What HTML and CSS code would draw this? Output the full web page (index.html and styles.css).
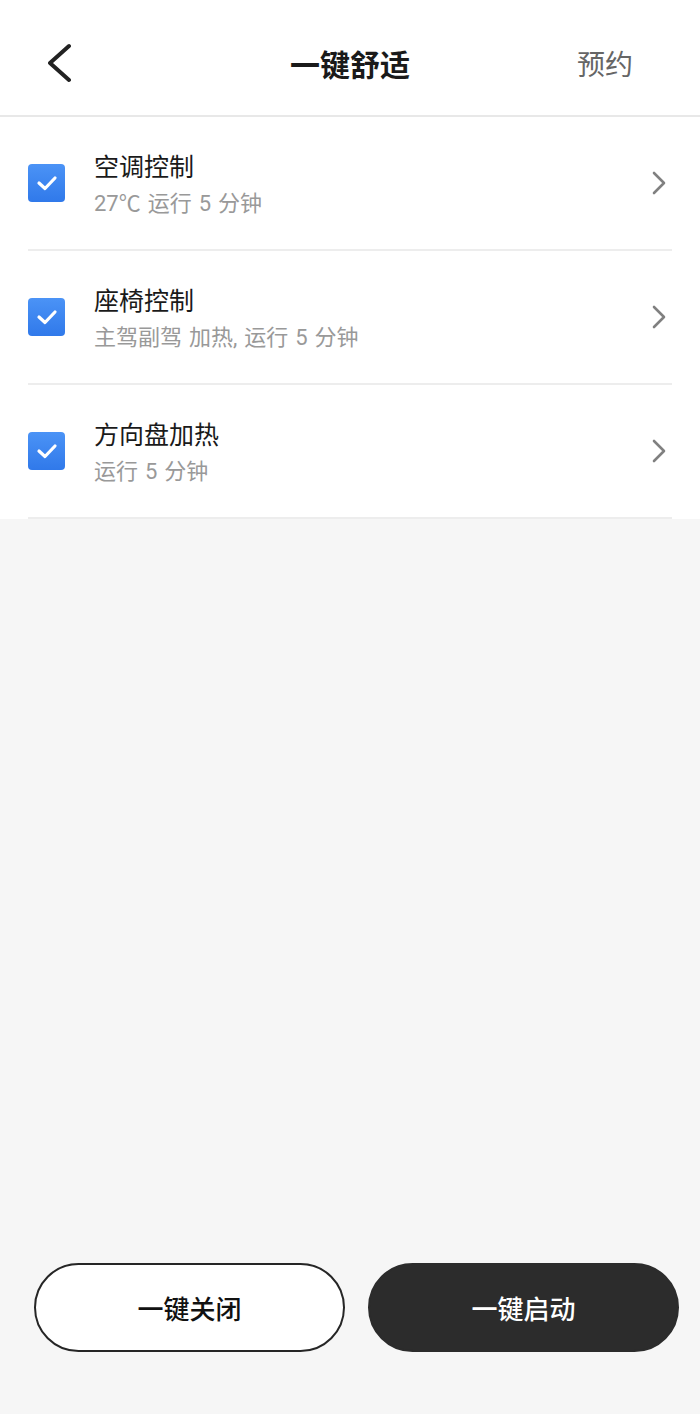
FILE: index.html
```html
<!DOCTYPE html>
<html lang="zh-CN">
<head>
    <meta charset="UTF-8">
    <meta name="viewport" content="width=device-width, initial-scale=1.0">
    <title>一键舒适</title>
    <link rel="stylesheet" href="styles.css">
</head>
<body>
<div class="page">
    <header class="top-bar">
        <div class="top-left">
            <svg class="back-icon" width="26" height="40" viewBox="0 0 26 40">
                <polyline points="21,3 2,20 21,37" fill="none" stroke="#222" stroke-width="4" stroke-linecap="round" stroke-linejoin="round"/>
            </svg>
        </div>
        <h1 class="top-title">一键舒适</h1>
        <div class="top-right">预约</div>
    </header>

    <ul class="option-list">
        <li class="option-item">
            <span class="check-box">
                <svg width="22" height="16" viewBox="0 0 22 16"><polyline points="3,8 9,13.5 19,3" fill="none" stroke="#fff" stroke-width="3.2" stroke-linecap="round" stroke-linejoin="round"/></svg>
            </span>
            <div class="option-text">
                <div class="option-name">空调控制</div>
                <div class="option-desc">27℃ 运行 5 分钟</div>
            </div>
            <svg class="arrow-icon" width="16" height="26" viewBox="0 0 16 26"><polyline points="3,3 13,13 3,23" fill="none" stroke="#808080" stroke-width="2.6" stroke-linecap="round" stroke-linejoin="round"/></svg>
        </li>
        <li class="option-item">
            <span class="check-box">
                <svg width="22" height="16" viewBox="0 0 22 16"><polyline points="3,8 9,13.5 19,3" fill="none" stroke="#fff" stroke-width="3.2" stroke-linecap="round" stroke-linejoin="round"/></svg>
            </span>
            <div class="option-text">
                <div class="option-name">座椅控制</div>
                <div class="option-desc">主驾副驾 加热, 运行 5 分钟</div>
            </div>
            <svg class="arrow-icon" width="16" height="26" viewBox="0 0 16 26"><polyline points="3,3 13,13 3,23" fill="none" stroke="#808080" stroke-width="2.6" stroke-linecap="round" stroke-linejoin="round"/></svg>
        </li>
        <li class="option-item">
            <span class="check-box">
                <svg width="22" height="16" viewBox="0 0 22 16"><polyline points="3,8 9,13.5 19,3" fill="none" stroke="#fff" stroke-width="3.2" stroke-linecap="round" stroke-linejoin="round"/></svg>
            </span>
            <div class="option-text">
                <div class="option-name">方向盘加热</div>
                <div class="option-desc">运行 5 分钟</div>
            </div>
            <svg class="arrow-icon" width="16" height="26" viewBox="0 0 16 26"><polyline points="3,3 13,13 3,23" fill="none" stroke="#808080" stroke-width="2.6" stroke-linecap="round" stroke-linejoin="round"/></svg>
        </li>
    </ul>

    <div class="spacer"></div>

    <div class="bottom-bar">
        <button type="button" class="btn btn-off">一键关闭</button>
        <button type="button" class="btn btn-on">一键启动</button>
    </div>
</div>
</body>
</html>
```

FILE: styles.css
```css
body {
    margin: 0;
    font-family: "Noto Sans CJK SC", "Noto Sans", sans-serif;
    background-color: #f6f6f6;
}

.page {
    display: flex;
    flex-direction: column;
    height: 1414px;
}

/* 顶部栏 */
.top-bar {
    display: flex;
    align-items: center;
    height: 105px;
    padding-top: 10px;
    background-color: #fff;
    border-bottom: 2px solid #e8e8e8;
}

.top-left {
    width: 150px;
    padding-left: 48px;
    box-sizing: border-box;
    display: flex;
    align-items: center;
}

.top-title {
    flex: 1;
    margin: 0;
    text-align: center;
    font-size: 30px;
    font-weight: 700;
    color: #1a1a1a;
}

.top-right {
    width: 150px;
    padding-right: 67px;
    box-sizing: border-box;
    text-align: right;
    font-size: 28px;
    color: #666;
}

/* 列表 */
.option-list {
    list-style: none;
    margin: 0;
    padding: 0 28px;
    background-color: #fff;
}

.option-item {
    display: flex;
    align-items: center;
    height: 132px;
    border-bottom: 2px solid #ededed;
}

.check-box {
    width: 37px;
    height: 38px;
    border-radius: 4px;
    background: linear-gradient(#4b93f6, #3079ea);
    display: flex;
    align-items: center;
    justify-content: center;
    flex-shrink: 0;
}

.option-text {
    flex: 1;
    margin-left: 29px;
}

.option-name {
    font-size: 25px;
    line-height: 34px;
    color: #1a1a1a;
}

.option-desc {
    margin-top: 7px;
    font-family: Roboto, "Noto Sans CJK SC", sans-serif;
    font-size: 22px;
    line-height: 30px;
    word-spacing: 1.5px;
    color: #999;
}

.arrow-icon {
    margin-right: 5px;
}

.spacer {
    flex: 1;
}

/* 底部按钮 */
.bottom-bar {
    display: flex;
    gap: 23px;
    padding: 0 21px 62px 34px;
}

.btn {
    flex: 1;
    height: 89px;
    border-radius: 45px;
    font-family: inherit;
    font-size: 26px;
    font-weight: 500;
    cursor: pointer;
}

.btn-off {
    background-color: #fff;
    color: #111;
    border: 2px solid #262626;
}

.btn-on {
    background-color: #2c2c2c;
    color: #fff;
    border: 2px solid #2c2c2c;
}
```
